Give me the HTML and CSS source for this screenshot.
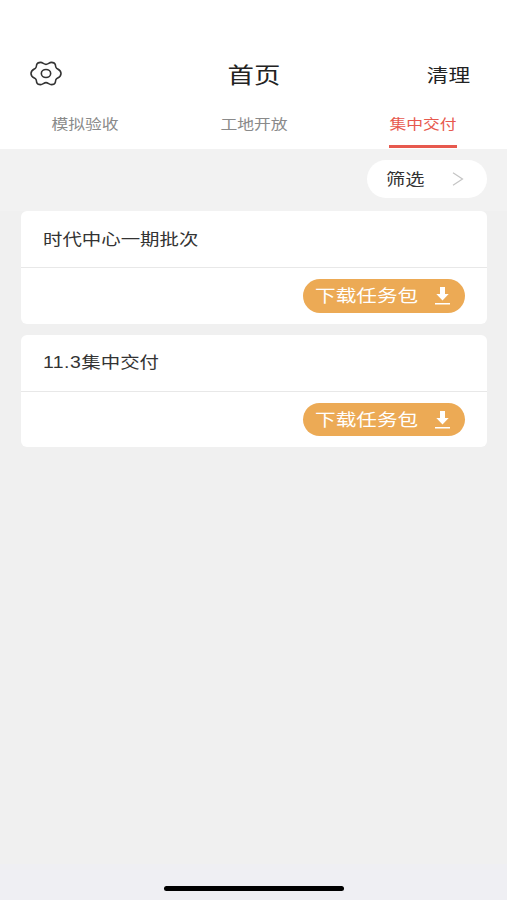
FILE: index.html
```html
<!DOCTYPE html>
<html lang="zh-CN">
<head>
<meta charset="utf-8">
<title>首页</title>
<link rel="stylesheet" href="styles.css">
</head>
<body>
<div class="app">
  <header class="header">
    <svg class="gear" viewBox="0 0 96 75" fill="none" stroke="#333" stroke-width="4.8" stroke-linejoin="round">
      <path d="M48 10C42 10 38 4 32 4C27 4 21 7 20 11C19 15 20 19 16 22C12 25 3 27 3 37.500C3 48 12 50 16 53C20 56 19 60 20 64C21 68 27 71 32 71C38 71 42 65 48 65C54 65 58 71 64 71C69 71 75 68 76 64C77 60 76 56 80 53C84 50 93 48 93 37.500C93 27 84 25 80 22C76 19 77 15 76 11C75 7 69 4 64 4C58 4 54 10 48 10Z"/>
      <ellipse cx="48" cy="37.500" rx="14" ry="12"/>
    </svg>
    <h1 class="title"><span class="wide">首页</span></h1>
    <div class="clear"><span class="wide">清理</span></div>
  </header>
  <nav class="tabs">
    <div class="tab"><span class="wide">模拟验收</span></div>
    <div class="tab"><span class="wide">工地开放</span></div>
    <div class="tab active"><span class="wide">集中交付</span></div>
  </nav>
  <div class="toolbar">
    <div class="filter">
      <span class="wide">筛选</span>
      <svg class="chevron" viewBox="0 0 12 14" fill="none" stroke="#c4c4c4" stroke-width="1.2"><path d="M1 .7L10.500 7L1 13.300"/></svg>
    </div>
  </div>
  <main class="list">
    <section class="card">
      <h2 class="name"><span class="wide">时代中心一期批次</span></h2>
      <div class="actions">
        <div class="download">
          <span class="wide">下载任务包</span>
          <svg class="arrow" viewBox="0 0 15 18" fill="#fff"><path d="M5 0H10V7H13.700L7.500 13.500L1.300 7H5ZM0 16H15V17.500H0Z"/></svg>
        </div>
      </div>
    </section>
    <section class="card">
      <h2 class="name"><span class="wide"><span class="number">11.3</span>集中交付</span></h2>
      <div class="actions">
        <div class="download">
          <span class="wide">下载任务包</span>
          <svg class="arrow" viewBox="0 0 15 18" fill="#fff"><path d="M5 0H10V7H13.700L7.500 13.500L1.300 7H5ZM0 16H15V17.500H0Z"/></svg>
        </div>
      </div>
    </section>
  </main>
  <footer class="bottom"><div class="home"></div></footer>
</div>
</body>
</html>
```
FILE: styles.css
```css
* { box-sizing: border-box; }
body {
  margin: 0;
  background: #f0f0f0;
  color: #333;
  font-family: "Liberation Sans", "Noto Sans CJK SC", sans-serif;
}
h1, h2 { margin: 0; font-weight: 400; }
svg { display: block; flex: none; }
.app { height: 900px; display: flex; flex-direction: column; }
/* Letterforms are drawn 20% wider than their natural width. */
.wide {
  display: inline-block;
  white-space: nowrap;
  transform: scaleX(1.2);
  transform-origin: left center;
}
.header {
  height: 100px;
  padding: 52px 37px 0 30px;
  background: #fff;
  display: grid;
  grid-template-columns: 1fr auto 1fr;
  align-items: center;
}
.gear { width: 32px; height: 25px; margin-top: -5px; }
.title { font-size: 22px; line-height: 48px; color: #222; margin-left: 8px; }
.title .wide, .tab .wide { transform-origin: center; }
.clear { font-size: 18px; line-height: 48px; text-align: right; color: #222; }
.clear .wide { transform-origin: right center; }
.tabs {
  height: 49px;
  background: #fff;
  display: grid;
  grid-template-columns: repeat(3, 1fr);
  justify-items: center;
}
.tab {
  width: 68px;
  height: 48px;
  font-size: 14px;
  line-height: 48px;
  text-align: center;
  color: #8a8a8a;
  border-bottom: 3px solid transparent;
}
.tab.active { color: #e7594e; border-color: #e7594e; }
.toolbar {
  height: 62px;
  padding: 11px 20px 0 0;
  background: #f2f2f2;
  display: flex;
  justify-content: flex-end;
}
.filter {
  width: 120px;
  height: 38px;
  padding: 0 23px 0 19px;
  border-radius: 19px;
  background: #fff;
  display: flex;
  align-items: center;
  justify-content: space-between;
  font-size: 16px;
}
.filter .wide { margin-bottom: 2px; }
.chevron { width: 12px; height: 14px; }
.list {
  flex: 1;
  padding: 0 20px 0 21px;
  display: flex;
  flex-direction: column;
  gap: 11px;
}
.card { height: 113px; border-radius: 6px; background: #fff; }
.card + .card { height: 112px; }
.name {
  height: 57px;
  padding-left: 22px;
  border-bottom: 1px solid #e8e8e8;
  font-size: 16.200px;
  line-height: 56px;
}
.card + .card .name { line-height: 55px; }
.number { letter-spacing: .4px; }
.actions { padding: 11px 22px 0 0; display: flex; justify-content: flex-end; }
.download {
  width: 162px;
  height: 34px;
  padding: 0 15px 0 12px;
  border-radius: 17px;
  background: #ecaa55;
  color: #fff;
  display: flex;
  align-items: center;
  justify-content: space-between;
  font-size: 17.200px;
}
.card + .card .download { height: 33px; }
.download .wide { margin-bottom: 3px; }
.arrow { width: 15px; height: 18px; }
.bottom {
  height: 36px;
  padding-top: 22px;
  background: #efeff3;
  display: flex;
  justify-content: center;
}
.home { width: 180px; height: 5px; border-radius: 3px; background: #000; }
```
